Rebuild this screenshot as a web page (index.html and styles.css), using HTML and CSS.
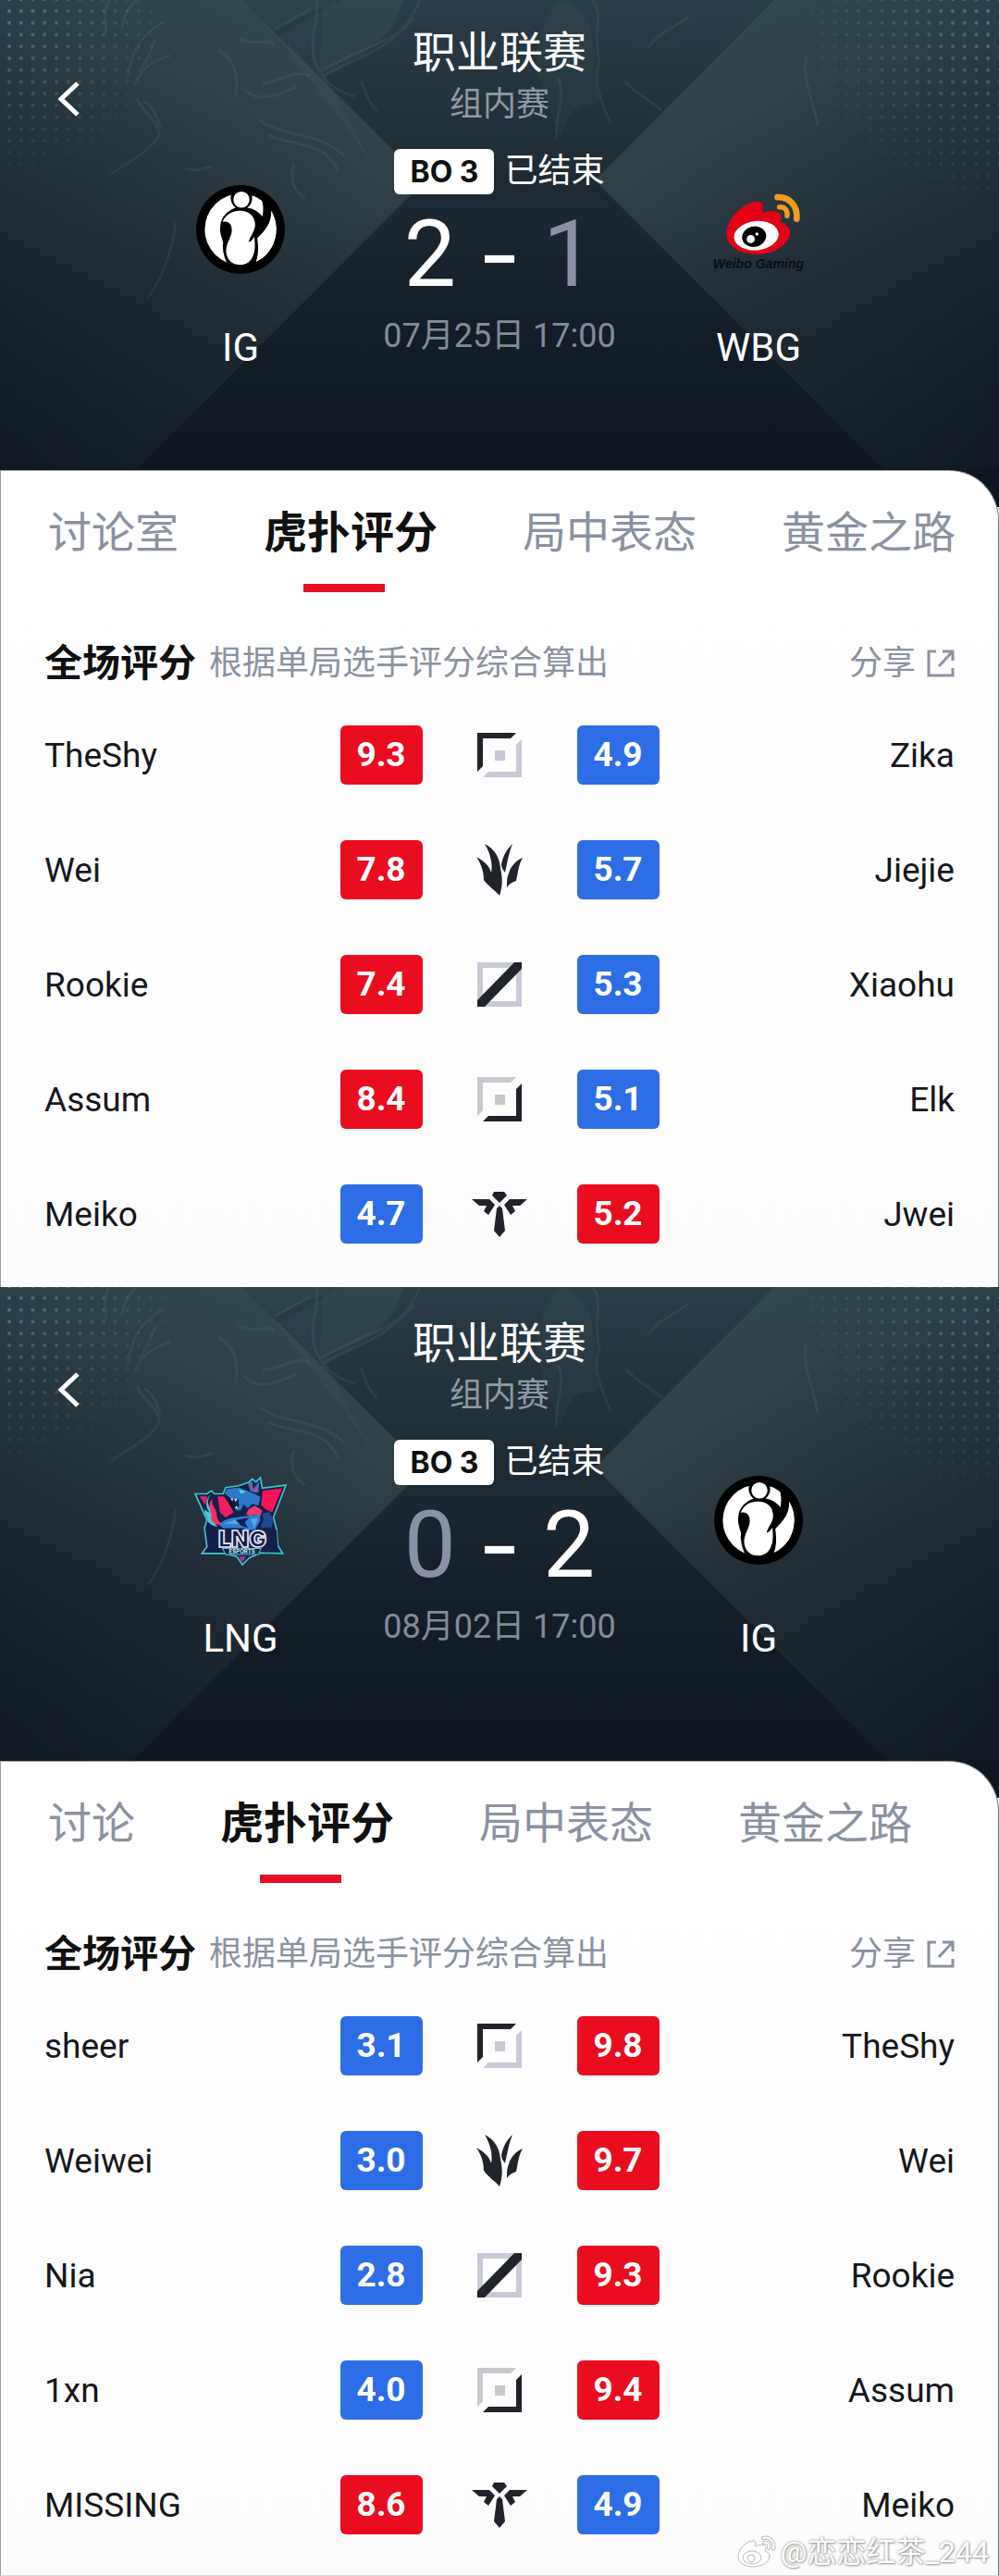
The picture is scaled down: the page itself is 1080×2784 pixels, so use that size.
FILE: index.html
```html
<!DOCTYPE html>
<html lang="zh">
<head>
    <meta charset="UTF-8">
    <meta name="viewport" content="width=device-width, initial-scale=1.0">
    <title>职业联赛 - 虎扑评分</title>
    <link rel="stylesheet" href="styles.css">
</head>
<body>
    <!-- shared icons -->
    <svg class="sprite" width="0" height="0" aria-hidden="true">
        <defs>
            <linearGradient id="bgBase" x1="0" y1="0" x2="0" y2="1">
                <stop offset="0" stop-color="#2a3d46"/>
                <stop offset="0.4" stop-color="#1d2a34"/>
                <stop offset="0.6" stop-color="#17222d"/>
                <stop offset="1" stop-color="#0e1721"/>
            </linearGradient>
            <linearGradient id="bgLeft" x1="0" y1="0" x2="1" y2="0">
                <stop offset="0" stop-color="#7d9a9a" stop-opacity="0.02"/>
                <stop offset="1" stop-color="#7d9a9a" stop-opacity="0.2"/>
            </linearGradient>
            <linearGradient id="bgRight" x1="1" y1="0" x2="0" y2="0">
                <stop offset="0" stop-color="#7d9a9a" stop-opacity="0.02"/>
                <stop offset="1" stop-color="#7d9a9a" stop-opacity="0.2"/>
            </linearGradient>
            <linearGradient id="bgShade" x1="0" y1="0" x2="0" y2="1">
                <stop offset="0.45" stop-color="#0e1721" stop-opacity="0"/>
                <stop offset="1" stop-color="#0e1721" stop-opacity="0.4"/>
            </linearGradient>
            <radialGradient id="dotFade">
                <stop offset="0" stop-color="#fff"/>
                <stop offset="1" stop-color="#fff" stop-opacity="0"/>
            </radialGradient>
            <pattern id="dots" x="4" y="6" width="12.75" height="12.75" patternUnits="userSpaceOnUse">
                <circle cx="6" cy="6" r="2" fill="#5c787e"/>
            </pattern>
            <mask id="dotMask">
                <circle cx="0" cy="0" r="200" fill="url(#dotFade)"/>
                <circle cx="1080" cy="0" r="230" fill="url(#dotFade)"/>
            </mask>
        </defs>

        <symbol id="bg" viewBox="0 0 1080 512" preserveAspectRatio="xMidYMin slice">
            <rect width="1080" height="512" fill="url(#bgBase)"/>
            <path d="M0 0H262L459 196L143 512H0Z" fill="url(#bgLeft)"/>
            <path d="M1080 0H837L643 195L960 512H1080Z" fill="url(#bgRight)"/>
            <g fill="none" stroke="#8aa5a6" stroke-width="3" stroke-opacity="0.1">
                <path d="M118 0C110 12 116 24 114 36M148 0C136 10 134 20 132 30M176 24C150 40 142 56 138 84M168 42C162 60 156 70 152 76M184 60C160 66 150 80 146 92"/>
                <path d="M148 106C154 124 170 126 172 146C160 166 140 174 120 188M156 110C168 116 170 130 174 138"/>
                <path d="M236 54C256 66 258 86 254 104M258 42C276 50 290 40 296 48M284 90C306 88 318 74 336 82M264 96C276 112 300 104 320 94M280 130C310 150 340 140 372 168M290 146C320 160 350 150 366 186"/>
                <path d="M296 32L336 10M342 0C346 22 330 50 344 74C352 90 366 100 384 104M350 82C380 62 430 58 454 0M346 78C390 50 420 50 448 20M390 88C396 100 398 112 408 120"/>
                <path d="M318 176C312 196 318 206 330 214M200 182C212 186 220 182 230 180M190 240C186 270 176 300 160 322"/>
                <path d="M640 0C654 14 640 40 648 66C640 90 650 108 660 134M700 52C712 34 730 30 744 18M676 88C690 104 706 110 716 120M602 150C598 130 612 110 604 84M872 60C866 84 880 110 884 136"/>
            </g>
            <g fill="#7f9ea0" fill-opacity="0.06">
                <path d="M296 32L348 8L346 76C384 62 420 50 436 0H262Z"/>
                <path d="M604 0C650 10 640 60 648 110C636 120 620 100 606 150C590 100 560 60 604 0Z"/>
                <path d="M370 0L436 0C430 40 396 58 352 84L410 190C380 140 336 90 300 40Z"/>
            </g>
            <rect width="1080" height="512" fill="url(#dots)" mask="url(#dotMask)"/>
            <rect width="1080" height="512" fill="url(#bgShade)"/>
        </symbol>

        <symbol id="ig" viewBox="69 59 286 286">
            <circle cx="212" cy="202" r="143" fill="#000"/>
            <circle cx="212" cy="202" r="115" fill="#fff"/>
            <path d="M183 84C176 106 184 122 196 132C172 140 150 160 147 190C144 214 152 228 156 244C152 268 160 296 174 322H256C272 290 270 258 266 230C290 206 312 184 311 142C325 150 334 164 340 190L330 120L270 84C284 104 288 128 283 160C272 146 256 136 234 132C248 122 254 104 246 84Z" fill="#000"/>
            <circle cx="215" cy="106" r="26" fill="#fff"/>
            <path d="M154 178C166 150 190 140 214 142C244 144 260 164 259 190C258 208 244 222 238 242C246 242 250 234 257 226C258 244 260 256 256 276C250 302 234 316 212 316C186 316 168 300 166 274C164 246 184 228 184 204C184 186 174 172 154 178Z" fill="#fff"/>
            <path d="M311 142C320 160 328 176 327 204C326 250 300 290 262 306C272 284 272 260 268 234C292 210 314 188 311 142Z" fill="#fff"/>
            <path d="M251 94C272 98 280 112 280 134C280 142 278 148 276 152C268 144 258 136 244 130C252 118 254 106 251 94Z" fill="#fff"/>
        </symbol>

        <symbol id="top" viewBox="0 0 60 60">
            <path d="M6 6H48L42 12H12V42L6 48Z" fill="#22242b"/>
            <path d="M54 13V54H12L18 48H48V19Z" fill="#c8cad6"/>
            <path d="M25 25H36V36H25Z" fill="#c8cad6"/>
        </symbol>
        <symbol id="jungle" viewBox="0 0 60 60">
            <path d="M14 2C26 8 30 18 31 28C33 38 34 46 30 58C25 52 18 48 13 41C13 30 9 22 5 16C14 21 19 26 21 33C23 24 20 12 14 2Z" fill="#22242b"/>
            <path d="M44 2C40 12 39 20 36 33C33 30 32 26 32 24C34 14 38 8 44 2ZM55 17C50 26 50 34 48 42C44 43 41 45 38 49C38 42 38 38 40 34C42 26 48 20 55 17Z" fill="#22242b"/>
        </symbol>
        <symbol id="mid" viewBox="0 0 60 60">
            <path d="M6 6H54V54H6ZM12 12V48H48V12Z" fill="#c8cad6" fill-rule="evenodd"/>
            <path d="M46 6H54V13L14 54H6V47Z" fill="#22242b"/>
        </symbol>
        <symbol id="bot" viewBox="0 0 60 60">
            <path d="M6 6H48L42 12H12V42L6 48Z" fill="#c8c9ce"/>
            <path d="M54 13V54H12L18 48H48V19Z" fill="#22242b"/>
            <path d="M25 25H36V36H25Z" fill="#c8c9ce"/>
        </symbol>
        <symbol id="support" viewBox="0 0 60 60">
            <path d="M24 6H35L38 10L30 18L22 10ZM0 14H19L25 20L18 31L13 27L16 21H8ZM60 14H41L35 20L42 31L47 27L44 21H52ZM30 21L33 24L36 48L30 55L24 48L27 24Z" fill="#22242b"/>
        </symbol>
        <symbol id="share" viewBox="0 0 30 30">
            <path d="M10 2H2V28H28V20M17 2H28V12M28 2L13 18" fill="none" stroke="#8b92a0" stroke-width="3"/>
        </symbol>
        <symbol id="back" viewBox="0 0 24 38">
            <path d="M22 2L4 19L22 36" fill="none" stroke="#fff" stroke-width="5"/>
        </symbol>
    </svg>

    <section class="match">
        <header class="match-head">
            <svg class="head-bg" aria-hidden="true"><use href="#bg"/></svg>
            <button class="back" aria-label="返回"><svg width="24" height="38"><use href="#back"/></svg></button>
            <h1>职业联赛</h1>
            <p class="stage">组内赛</p>
            <div class="versus">
                <div class="team">
                    <svg class="logo"><use href="#ig"/></svg>
                    <span>IG</span>
                </div>
                <div class="result">
                    <div class="status"><b>BO 3</b><span>已结束</span></div>
                    <div class="points"><span>2</span><i>-</i><span class="lose">1</span></div>
                    <time>07月25日 17:00</time>
                </div>
                <div class="team">
                    <svg class="logo" viewBox="62 59 286 286">
                        <path d="M102 216C102 170 152 116 200 112C220 110 222 130 216 150C240 140 272 138 278 158C280 166 276 172 274 178C292 182 308 196 307 212C305 248 256 282 204 282C148 282 102 258 102 216Z" fill="#e50014"/>
                        <ellipse cx="198" cy="222" rx="72" ry="47" fill="#fff" transform="rotate(-6 198 222)"/>
                        <ellipse cx="191" cy="225" rx="39" ry="33" fill="#000" transform="rotate(-12 191 225)"/>
                        <circle cx="180" cy="233" r="13" fill="#fff"/>
                        <circle cx="200" cy="217" r="5" fill="#fff"/>
                        <g fill="none" stroke="#f09c1c" stroke-linecap="round">
                            <path d="M266 98C304 96 332 126 328 168" stroke-width="20"/>
                            <path d="M272 130C288 128 300 140 297 158" stroke-width="16"/>
                        </g>
                        <text x="205" y="328" class="wbg-text">Weibo Gaming</text>
                    </svg>
                    <span>WBG</span>
                </div>
            </div>
        </header>
        <div class="panel-wrap">
            <div class="panel">
                <nav class="tabs">
                    <a href="#">讨论室</a>
                    <a href="#" class="active">虎扑评分</a>
                    <a href="#">局中表态</a>
                    <a href="#">黄金之路</a>
                </nav>
                <div class="panel-title">
                    <h2>全场评分</h2>
                    <p>根据单局选手评分综合算出</p>
                    <button class="share">分享<svg width="30" height="30"><use href="#share"/></svg></button>
                </div>
                <table class="scores">
                    <tr><td>TheShy</td><td><b class="red">9.3</b></td><td><svg><use href="#top"/></svg></td><td><b class="blue">4.9</b></td><td>Zika</td></tr>
                    <tr><td>Wei</td><td><b class="red">7.8</b></td><td><svg><use href="#jungle"/></svg></td><td><b class="blue">5.7</b></td><td>Jiejie</td></tr>
                    <tr><td>Rookie</td><td><b class="red">7.4</b></td><td><svg><use href="#mid"/></svg></td><td><b class="blue">5.3</b></td><td>Xiaohu</td></tr>
                    <tr><td>Assum</td><td><b class="red">8.4</b></td><td><svg><use href="#bot"/></svg></td><td><b class="blue">5.1</b></td><td>Elk</td></tr>
                    <tr><td>Meiko</td><td><b class="blue">4.7</b></td><td><svg><use href="#support"/></svg></td><td><b class="red">5.2</b></td><td>Jwei</td></tr>
                </table>
            </div>
        </div>
    </section>

    <section class="match second">
        <header class="match-head">
            <svg class="head-bg" aria-hidden="true"><use href="#bg"/></svg>
            <button class="back" aria-label="返回"><svg width="24" height="38"><use href="#back"/></svg></button>
            <h1>职业联赛</h1>
            <p class="stage">组内赛</p>
            <div class="versus">
                <div class="team">
                    <svg class="logo" viewBox="69 72 286 286">
                        <path d="M66 130H104L118 120L128 130H156L164 110L206 104L240 92L250 82L262 92L276 78L282 112L358 102L318 206L328 244L332 296L348 322L276 320L240 336L218 358L200 332L160 322H88L104 300L96 240L104 214Z" fill="#15204a" stroke="#3fc5c8" stroke-width="5"/>
                        <path d="M80 138H106L98 166ZM138 138H158L174 160L190 190L164 206L146 190Z" fill="#ef1e5c"/>
                        <path d="M284 120L346 112L314 190L294 180L278 166Z" fill="#ff1458"/>
                        <path d="M118 130C100 150 108 168 118 180C128 196 118 214 138 236C116 232 102 220 104 206C96 196 94 186 98 180C104 186 108 190 112 190C98 170 98 146 118 130Z" fill="#46c8d2"/>
                        <path d="M122 146C116 168 136 178 136 200C136 212 144 222 156 228C136 234 116 222 118 206C124 196 100 164 122 146Z" fill="#ff2a63"/>
                        <path d="M160 128L170 114L208 110L232 120L258 130L276 140L270 168L250 162L236 176L222 164L212 184L194 182L208 168L204 146L182 146Z" fill="#2c78c8"/>
                        <path d="M168 142L182 146L188 164L204 172L194 184L176 164Z" fill="#0b1236"/>
                        <path d="M180 146L188 144L186 154ZM192 146L202 146L196 156ZM194 178L198 168L204 176Z" fill="#e8f4ff"/>
                        <path d="M206 116L230 122L214 130Z" fill="#58d7e4"/>
                        <path d="M236 96L250 90L252 116L272 90L270 126L244 122Z" fill="#2c78c8"/>
                        <path d="M242 106L250 100L254 122L268 106L262 128Z" fill="#f0386c"/>
                        <path d="M238 180L258 168L282 184L274 208L256 196L246 202L230 196Z" fill="#f0386c"/>
                        <path d="M282 192L304 190L318 212L312 238H276L286 214Z" fill="#1c4c96"/>
                        <path d="M144 230C160 206 190 208 214 204L272 196L276 214L258 248L240 262L222 240H156Z" fill="#2f7fd0"/>
                        <path d="M160 226L192 214L232 216L216 226ZM244 210L268 208L256 240Z" fill="#57a8ea"/>
                        <path d="M196 214L240 206L226 222L236 240L214 232Z" fill="#132050"/>
                        <path d="M108 246H328L332 304H108Z" fill="#14204c"/>
                        <text x="218" y="301" class="lng-text">LNG</text>
                        <path d="M154 306H278L270 325H164Z" fill="#13204b" stroke="#3fc5c8" stroke-width="3"/>
                        <text x="217" y="322" class="lng-sub">ESPORTS</text>
                        <path d="M206 332H230L218 350Z" fill="#b03a86"/>
                    </svg>
                    <span>LNG</span>
                </div>
                <div class="result">
                    <div class="status"><b>BO 3</b><span>已结束</span></div>
                    <div class="points"><span class="lose">0</span><i>-</i><span>2</span></div>
                    <time>08月02日 17:00</time>
                </div>
                <div class="team">
                    <svg class="logo"><use href="#ig"/></svg>
                    <span>IG</span>
                </div>
            </div>
        </header>
        <div class="panel-wrap">
            <div class="panel">
                <nav class="tabs">
                    <a href="#">讨论</a>
                    <a href="#" class="active">虎扑评分</a>
                    <a href="#">局中表态</a>
                    <a href="#">黄金之路</a>
                </nav>
                <div class="panel-title">
                    <h2>全场评分</h2>
                    <p>根据单局选手评分综合算出</p>
                    <button class="share">分享<svg width="30" height="30"><use href="#share"/></svg></button>
                </div>
                <table class="scores">
                    <tr><td>sheer</td><td><b class="blue">3.1</b></td><td><svg><use href="#top"/></svg></td><td><b class="red">9.8</b></td><td>TheShy</td></tr>
                    <tr><td>Weiwei</td><td><b class="blue">3.0</b></td><td><svg><use href="#jungle"/></svg></td><td><b class="red">9.7</b></td><td>Wei</td></tr>
                    <tr><td>Nia</td><td><b class="blue">2.8</b></td><td><svg><use href="#mid"/></svg></td><td><b class="red">9.3</b></td><td>Rookie</td></tr>
                    <tr><td>1xn</td><td><b class="blue">4.0</b></td><td><svg><use href="#bot"/></svg></td><td><b class="red">9.4</b></td><td>Assum</td></tr>
                    <tr><td>MISSING</td><td><b class="red">8.6</b></td><td><svg><use href="#support"/></svg></td><td><b class="blue">4.9</b></td><td>Meiko</td></tr>
                </table>
            </div>
        </div>
        <div class="watermark">
            <svg width="44" height="36" viewBox="0 0 44 36">
                <path d="M2 23C2 15 11 6 18 6C22 6 21 9 20 12C25 10 31 9 32 13C32 15 31 17 31 17C34 18 36 20 36 23C36 29 27 34 18 34C9 34 2 30 2 23Z" fill="#fff" stroke="#bbb"/>
                <ellipse cx="17" cy="24" rx="10" ry="7" fill="#fff" stroke="#bbb"/>
                <circle cx="16" cy="25" r="4" fill="#fff" stroke="#bbb"/>
                <path d="M29 3C37 1 42 8 40 15M30 8C34 7 36 10 35 14" fill="none" stroke="#bbb" stroke-width="4" stroke-linecap="round"/>
                <path d="M29 3C37 1 42 8 40 15M30 8C34 7 36 10 35 14" fill="none" stroke="#fff" stroke-width="2" stroke-linecap="round"/>
            </svg>
            <span>@恋恋红茶_244</span>
        </div>
    </section>
</body>
</html>
```

FILE: styles.css
```css
* {
    box-sizing: border-box;
}
body {
    margin: 0;
    font-family: Roboto, "Noto Sans CJK SC", sans-serif;
    font-size: 36px;
    color: #16181d;
    background-color: #fff;
}
h1, h2, p {
    margin: 0;
    font-weight: normal;
}
button {
    padding: 0;
    border: none;
    background: none;
    font-family: inherit;
    cursor: pointer;
}
a {
    color: inherit;
    text-decoration: none;
}
svg {
    display: block;
}
symbol {
    overflow: visible;
}
.sprite {
    position: absolute;
}
.match {
    position: relative;
}

/* dark header */
.match-head {
    position: relative;
    padding: 29px 120px 107px;
    color: #fff;
    text-align: center;
    background-color: #17222d;
}
.second .match-head {
    padding-top: 33px;
}
.head-bg {
    position: absolute;
    top: 0;
    left: 0;
    width: 100%;
    height: 100%;
    overflow: hidden;
}
.back {
    position: absolute;
    top: 88px;
    left: 62px;
}
.second .back {
    top: 92px;
}
.match-head h1 {
    position: relative;
    font-size: 47px;
    line-height: 56px;
}
.stage {
    position: relative;
    margin-top: 6px;
    line-height: 44px;
    color: #8f9aa1;
}
.versus {
    position: relative;
    display: grid;
    grid-template-columns: 1fr 280px 1fr;
    margin-top: 26px;
}
.team {
    display: flex;
    flex-direction: column;
    align-items: center;
    padding-top: 39px;
    font-size: 42px;
    line-height: 50px;
}
.logo {
    width: 96px;
    height: 96px;
    margin-bottom: 55px;
    overflow: visible;
}
.status {
    display: flex;
    justify-content: center;
    gap: 11px;
    line-height: 49px;
}
.status b {
    width: 108px;
    border-radius: 6px;
    background-color: #fff;
    color: #111;
    font-family: Inter, sans-serif;
    font-size: 32px;
}
.points {
    display: flex;
    justify-content: center;
    margin-top: 15px;
    font-size: 100px;
    line-height: 100px;
}
.points i {
    width: 94px;
    font-family: Inter, sans-serif;
    font-style: normal;
}
.points .lose {
    color: #8a91a3;
}
.result time {
    display: block;
    margin-top: 16px;
    line-height: 44px;
    color: #828b98;
}
.wbg-text {
    font: italic bold 42px "Liberation Sans", sans-serif;
    text-anchor: middle;
    fill: #0b0d10;
}
.lng-text {
    font: 900 74px Inter, sans-serif;
    text-anchor: middle;
    fill: #131d4a;
    stroke: #e8e6f2;
    stroke-width: 5px;
}
.lng-sub {
    font: bold 18px Inter, sans-serif;
    text-anchor: middle;
    fill: #d8e4f0;
}

/* white panel, header colour shows behind the rounded corner */
.panel-wrap {
    background: linear-gradient(#0e1721 40px, #fff 40px);
}
.panel {
    padding: 37px 47px 17px;
    border: 1px solid #9a9da0;
    border-right-color: #6c6f72;
    border-bottom: none;
    border-radius: 0 54px 0 0;
    background: linear-gradient(#fff, #fcfcfc);
}
.second .panel {
    border-bottom: 1px solid #d8d8d8;
    padding-bottom: 14px;
}
.tabs {
    display: flex;
    gap: 92px;
    padding-left: 4px;
    font-size: 47px;
    line-height: 60px;
    white-space: nowrap;
    color: #8b92a0;
}
.tabs .active {
    font-weight: bold;
    color: #111;
}
.tabs .active::after {
    content: '';
    display: block;
    width: 88px;
    height: 9px;
    margin: 25px 0 1px 43px;
    background-color: #e31022;
}
.panel-title {
    display: flex;
    align-items: center;
    margin-top: 50px;
    line-height: 52px;
    color: #8b92a0;
}
.panel-title h2 {
    margin-right: 14px;
    font-size: 41px;
    font-weight: bold;
    color: #111;
}
.share {
    display: flex;
    align-items: center;
    gap: 12px;
    margin-left: auto;
    font-size: 36px;
    line-height: 52px;
    color: #8b92a0;
}
.scores {
    width: 100%;
    margin-top: 11px;
    border-collapse: collapse;
    table-layout: fixed;
    font-size: 37px;
}
.scores td {
    height: 124px;
    padding: 0;
}
.scores td:nth-child(2), .scores td:nth-child(4) {
    width: 89px;
}
.scores td:nth-child(3) {
    width: 167px;
}
.scores td:last-child {
    text-align: right;
}
.scores svg {
    width: 60px;
    height: 60px;
    margin: 0 auto;
}
.scores b {
    display: block;
    border-radius: 6px;
    line-height: 64px;
    text-align: center;
    color: #fff;
}
.red {
    background-color: #ea0d20;
}
.blue {
    background-color: #2d6de6;
}

.watermark {
    position: absolute;
    right: 11px;
    bottom: 6px;
    display: flex;
    align-items: center;
    gap: 4px;
    font-size: 32px;
    line-height: 40px;
    color: #fff;
    text-shadow: 0 0 3px #888, 1px 1px 2px #aaa;
}
```
